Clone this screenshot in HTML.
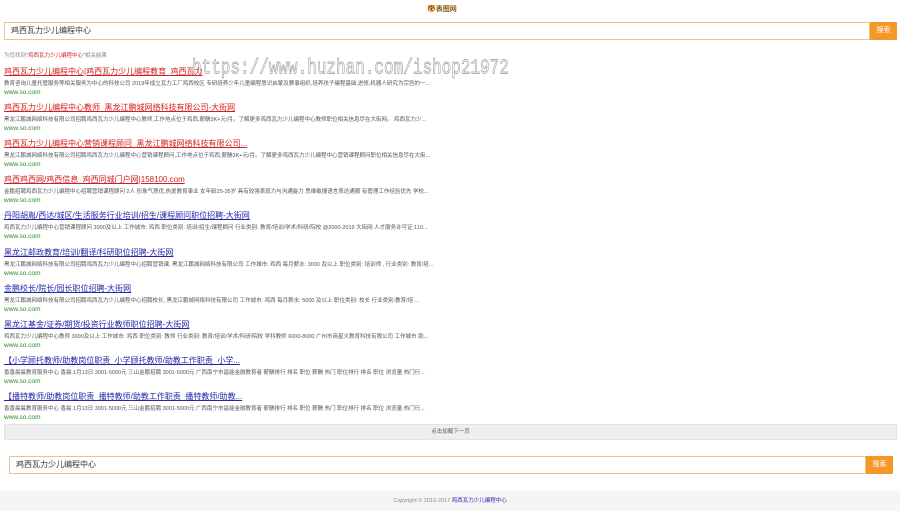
<!DOCTYPE html><html><head><meta charset="utf-8"><style>
*{margin:0;padding:0;box-sizing:border-box}
body{width:900px;height:511px;background:#fff;font-family:"Liberation Sans","Noto Sans CJK SC",sans-serif;position:relative;overflow:hidden}
.logo{position:absolute;left:427px;top:4px;width:36px;height:12px;font-size:7px;color:#8a5a10;font-weight:bold}
.sb{position:absolute;height:18px;border:1px solid #e8c48a;font-size:8px;color:#333;padding-left:6px;line-height:16px}
.btn{position:absolute;height:18px;background:#f4982a;color:#fff;font-size:7px;text-align:center;line-height:18px}
.r{position:absolute;left:4px;width:880px}
.t{font-size:8px;text-decoration:underline;color:#2626a8;line-height:10px;white-space:nowrap}
.t.red{color:#d0201f}
.d{font-size:5.5px;color:#555;line-height:9px;margin-top:3px;white-space:nowrap}
.u{font-size:6.5px;color:#2a8a2a;line-height:8px}
.wm{position:absolute;left:192px;top:56px;font-size:16px;font-family:"Liberation Mono",monospace;color:#fff;-webkit-text-stroke:0.5px #999;transform:scaleY(1.35);transform-origin:0 0;white-space:nowrap}
</style></head><body>
<div class="logo">🐯表图网</div>
<div class="sb" style="left:4px;top:22px;width:866px">鸡西瓦力少儿编程中心</div>
<div class="btn" style="left:870px;top:22px;width:27px">搜索</div>
<div style="position:absolute;left:4px;top:51px;font-size:5.5px;color:#888">为您找到"<span style="color:#d0201f">鸡西瓦力少儿编程中心</span>"相关结果</div>
<div class="r" style="top:67px"><div class="t red">鸡西瓦力少儿编程中心|鸡西瓦力少儿编程教育_鸡西瓦力</div><div class="d">教育咨询儿童托管服务等相关服务为中心的科技公司 2019年成立瓦力工厂鸡西校区 专研培养少年儿童编程意识启蒙及赛事组织,培养孩子编程基础,进修,机器人研究为宗旨的一...</div><div class="u">www.so.com</div></div>
<div class="r" style="top:103px"><div class="t red">鸡西瓦力少儿编程中心教师_黑龙江鹏城网络科技有限公司-大街网</div><div class="d">黑龙江鹏城网络科技有限公司招聘鸡西瓦力少儿编程中心教师,工作地点位于鸡西,薪酬3K+元/月。了解更多鸡西瓦力少儿编程中心教师职位相关信息尽在大街网。 鸡西瓦力少...</div><div class="u">www.so.com</div></div>
<div class="r" style="top:139px"><div class="t red">鸡西瓦力少儿编程中心营销课程顾问_黑龙江鹏城网络科技有限公司...</div><div class="d">黑龙江鹏城网络科技有限公司招聘鸡西瓦力少儿编程中心营销课程顾问,工作地点位于鸡西,薪酬3K+元/月。了解更多鸡西瓦力少儿编程中心营销课程顾问职位相关信息尽在大街...</div><div class="u">www.so.com</div></div>
<div class="r" style="top:175px"><div class="t red">鸡西鸡西网/鸡西信息_鸡西同城门户网|158100.com</div><div class="d">金鹏招聘鸡西瓦力少儿编程中心招聘营销课程顾问 2人 形象气质优,热爱教育事业 女年龄25-35岁 具有较强表现力与沟通能力 思维敏捷语言表达通顺 有管理工作经验优先 学校...</div><div class="u">www.so.com</div></div>
<div class="r" style="top:211px"><div class="t">丹阳胡胤/西达/城区/生活服务行业培训/招生/课程顾问职位招聘-大街网</div><div class="d">鸡西瓦力少儿编程中心营销课程顾问 3000及以上 工作城市: 鸡西 职位类别: 培训/招生/课程顾问 行业类别: 教育/培训/学术/科研/院校 @2000-2019 大街网 人才服务许可证:110...</div><div class="u">www.so.com</div></div>
<div class="r" style="top:248px"><div class="t">黑龙江邮政教育/培训/翻译/科研职位招聘-大街网</div><div class="d">黑龙江鹏城网络科技有限公司招聘鸡西瓦力少儿编程中心招聘营销课, 黑龙江鹏城网络科技有限公司 工作城市: 鸡西 每月薪水: 3000 及以上 职位类别: 培训师 , 行业类别: 教育/培...</div><div class="u">www.so.com</div></div>
<div class="r" style="top:284px"><div class="t">金鹏校长/院长/园长职位招聘-大街网</div><div class="d">黑龙江鹏城网络科技有限公司招聘鸡西瓦力少儿编程中心招聘校长, 黑龙江鹏城网络科技有限公司 工作城市: 鸡西 每月薪水: 5000 及以上 职位类别: 校长 行业类别:教育/培 ...</div><div class="u">www.so.com</div></div>
<div class="r" style="top:320px"><div class="t">黑龙江基金/证券/期货/投资行业教师职位招聘-大街网</div><div class="d">鸡西瓦力少儿编程中心教师 3000及以上 工作城市: 鸡西 职位类别: 教师 行业类别: 教育/培训/学术/科研/院校 学科教师 6000-8000 广州市商星义教育科技有限公司 工作城市 助...</div><div class="u">www.so.com</div></div>
<div class="r" style="top:356px"><div class="t">【小学顾托教师/助教岗位职责_小学顾托教师/助教工作职责_小学...</div><div class="d">香香晨晨教育服务中心 香晨 1月13日 3001-5000元 三山金鹏招聘 3001-5000元 广西南宁市邕能金融教育者 薪酬排行 排名 职位 薪酬 热门 职位排行 排名 职位 浏览量 热门行...</div><div class="u">www.so.com</div></div>
<div class="r" style="top:392px"><div class="t">【播特教师/助教岗位职责_播特教师/助教工作职责_播特教师/助教...</div><div class="d">香香晨晨教育服务中心 香晨 1月13日 3001-5000元 三山金鹏招聘 3001-5000元 广西南宁市邕能金融教育者 薪酬排行 排名 职位 薪酬 热门 职位排行 排名 职位 浏览量 热门行...</div><div class="u">www.so.com</div></div>
<div style="position:absolute;left:4px;top:424px;width:893px;height:16px;background:#eee;border:1px solid #e2e2e2;font-size:5.5px;color:#555;text-align:center;line-height:14px">点击加载下一页</div>
<div class="sb" style="left:9px;top:456px;width:857px">鸡西瓦力少儿编程中心</div>
<div class="btn" style="left:866px;top:456px;width:27px">搜索</div>
<div style="position:absolute;left:0;top:491px;width:900px;height:20px;background:#f5f5f5;font-size:5.5px;color:#888;text-align:center;line-height:20px">Copyright © 2016-2017 <span style="color:#2626a8">鸡西瓦力少儿编程中心</span></div>
<div class="wm">https://www.huzhan.com/ishop21972</div>
</body></html>
